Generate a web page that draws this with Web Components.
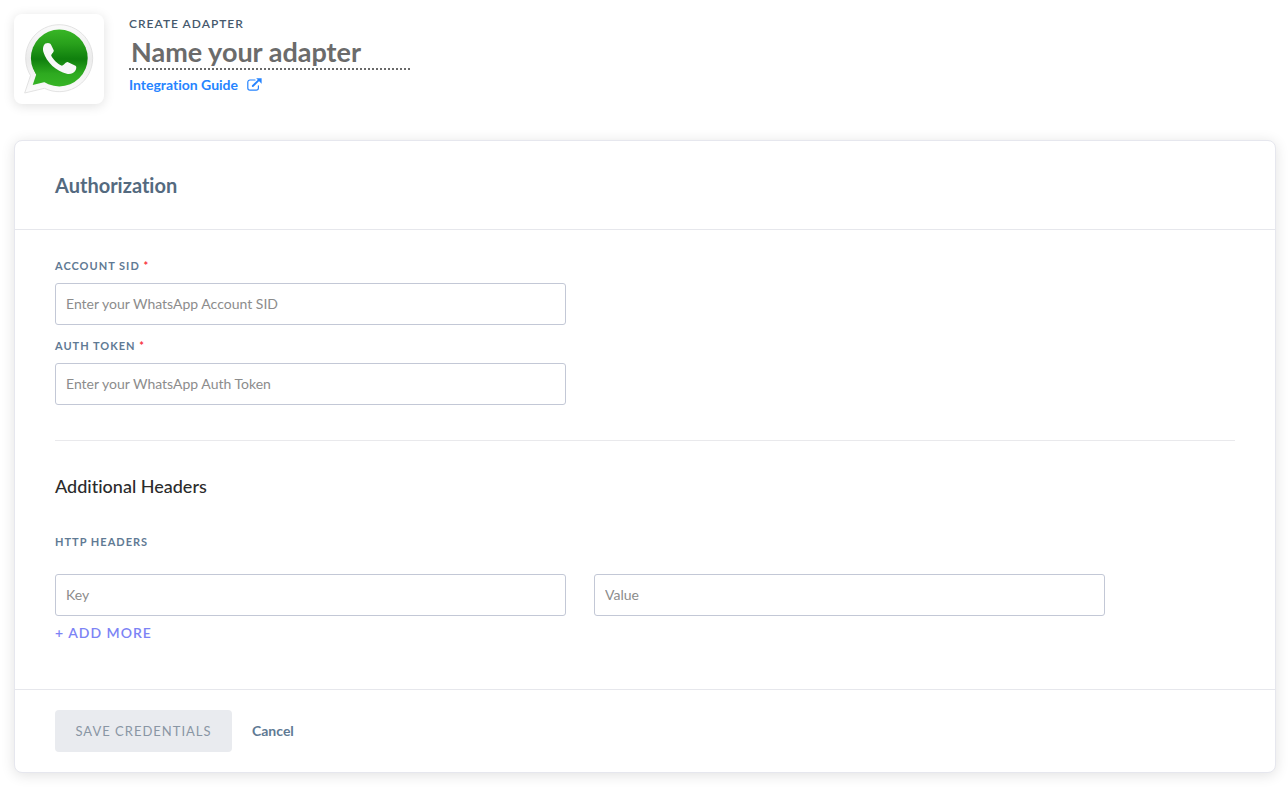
<!DOCTYPE html>
<html lang="en">
<head>
<meta charset="utf-8">
<meta name="viewport" content="width=device-width, initial-scale=1">
<title>Create Adapter</title>
<style>
  body {
    margin: 0;
    background: #fff;
    color: #2b2b2b;
    font-family: Lato, "Liberation Sans", sans-serif;
    font-size: 14px;
    font-variant-ligatures: none;
  }
</style>
</head>
<body>
<adapter-page>
  <adapter-header slot="header"></adapter-header>
  <adapter-card>
    <span slot="title">Authorization</span>
    <credential-fields>
      <text-field label="Account SID" placeholder="Enter your WhatsApp Account SID" required></text-field>
      <text-field label="Auth Token" placeholder="Enter your WhatsApp Auth Token" required></text-field>
    </credential-fields>
    <header-fields></header-fields>
    <form-actions slot="footer"></form-actions>
  </adapter-card>
</adapter-page>

<script>
  function define(name, html, setup) {
    const template = document.createElement('template');
    template.innerHTML = html;
    customElements.define(name, class extends HTMLElement {
      constructor() {
        super();
        this.attachShadow({ mode: 'open' }).append(template.content.cloneNode(true));
      }
      connectedCallback() {
        if (setup && !this.ready) {
          this.ready = true;
          setup(this, this.shadowRoot);
        }
      }
    });
  }

  define('adapter-page', `
    <style>
      :host { display: block; padding: 14px 12px 14px 14px; }
      main { margin-top: 36px; }
    </style>
    <slot name="header"></slot>
    <main><slot></slot></main>
  `);

  define('whatsapp-logo', `
    <style>
      :host {
        display: flex; align-items: center; justify-content: center;
        width: 90px; height: 90px; flex: none;
        border-radius: 8px; background: #fff;
        box-shadow: 0 2px 12px rgba(0, 0, 0, .12);
      }
      svg { display: block; }
    </style>
    <svg width="90" height="90" viewBox="0 0 90 90" role="img" aria-label="WhatsApp">
      <defs>
        <linearGradient id="green" gradientUnits="userSpaceOnUse" x1="0" y1="16" x2="0" y2="72">
          <stop offset="0" stop-color="#38b526"/>
          <stop offset=".25" stop-color="#28a01b"/>
          <stop offset=".52" stop-color="#0f7f0d"/>
          <stop offset=".78" stop-color="#2eaa20"/>
          <stop offset="1" stop-color="#36b425"/>
        </linearGradient>
        <linearGradient id="rim" x1="0" y1="0" x2="0" y2="1">
          <stop offset="0" stop-color="#fafafa"/>
          <stop offset=".5" stop-color="#ececec"/>
          <stop offset="1" stop-color="#fcfcfc"/>
        </linearGradient>
      </defs>
      <path d="M30.500 74.300L10.700 79L16.500 61.500A33.500 33.500 0 1 1 30.500 74.300Z" fill="url(#rim)" stroke="#dcdcdc" stroke-width=".8" stroke-linejoin="round"/>
      <circle cx="45.300" cy="44" r="28.400" fill="url(#green)"/>
      <path d="M20.500 57L22.200 60.500L18.700 71L33 67.500L38 60L24 50Z" fill="url(#green)"/>
      <path d="M31.500 29.600C34 28.500 36.500 29 37.300 31.200L39.700 36.300C40.300 38 37.200 40 37.200 41.600C38.800 45.200 43.300 49.800 47.400 51.600C49.500 52 51.700 48 53.600 48.100L61.500 51.700C62.700 52.300 62.400 54.200 61.700 55.900C60.200 58.900 56.500 60.500 52.800 59.700C42.500 57.300 32.500 48.500 29.400 38C28.400 34.500 29.400 31 31.500 29.600Z" fill="#f8f8f8"/>
    </svg>
  `);

  define('adapter-header', `
    <style>
      :host { display: block; }
      header { display: flex; gap: 25px; }
      .text { display: flex; flex-direction: column; align-items: flex-start; padding-top: 2px; }
      label {
        font-size: 12px; line-height: 16px; font-weight: 600;
        letter-spacing: 1px; text-transform: uppercase; color: #46596d;
      }
      input {
        box-sizing: border-box; width: 281px; height: 34px; margin: 4px 0 5px; padding: 0 2px 2px;
        border: 0; border-bottom: 2px dotted #696969; outline: 0; background: none;
        font: 700 27px/30px Lato, "Liberation Sans", sans-serif; color: #333;
      }
      input::placeholder { color: #6b6b6b; opacity: 1; }
      a {
        display: flex; align-items: center; gap: 9px;
        font-size: 14px; line-height: 20px; font-weight: 700;
        color: #2684ff; text-decoration: none;
      }
    </style>
    <header>
      <whatsapp-logo></whatsapp-logo>
      <div class="text">
        <label for="name">Create Adapter</label>
        <input id="name" type="text" placeholder="Name your adapter">
        <a href="#guide">Integration Guide
          <svg width="15" height="14" viewBox="0 0 15 14" fill="none" aria-hidden="true">
            <path d="M8 2H3A2.200 2.200 0 0 0 .8 4.200V10A2.200 2.200 0 0 0 3 12.200H9.200A2.200 2.200 0 0 0 11.400 10V7.800" stroke="currentColor" stroke-width="1.200" stroke-linecap="round"/>
            <path d="M5.800 8L12 1.900" stroke="currentColor" stroke-width="1.900" stroke-linecap="round"/>
            <path d="M9.200 .3H14.600V5.700Z" fill="currentColor"/>
          </svg>
        </a>
      </div>
    </header>
  `);

  define('adapter-card', `
    <style>
      :host {
        display: block; background: #fff;
        border: 1px solid #e6e7ee; border-radius: 8px;
        box-shadow: 0 2px 14px rgba(0, 0, 0, .12);
      }
      h2 {
        margin: 0; padding: 32px 40px; border-bottom: 1px solid #e6e7ec;
        font-size: 20px; line-height: 24px; font-weight: 700; color: #546a7f;
      }
      .body { padding: 28px 40px 47px; }
      footer { padding: 20px 40px; border-top: 1px solid #e6e7ec; }
    </style>
    <h2><slot name="title"></slot></h2>
    <div class="body"><slot></slot></div>
    <footer><slot name="footer"></slot></footer>
  `);

  define('text-field', `
    <style>
      :host { display: block; }
      label {
        display: block; margin-bottom: 9px;
        font-size: 11px; line-height: 16px; font-weight: 700;
        letter-spacing: 1px; text-transform: uppercase; color: #5f7a94;
      }
      label[hidden], .star[hidden] { display: none; }
      .star { color: #f9303c; }
      input {
        display: block; box-sizing: border-box; width: 100%; height: 42px; padding: 0 10px 1px;
        border: 1px solid #c3c8d6; border-radius: 3px; background: #fff;
        font: 400 14px/20px Lato, "Liberation Sans", sans-serif; color: #333;
      }
      input::placeholder { color: #8c8c8c; opacity: 1; }
    </style>
    <label for="field"><span class="name"></span> <span class="star">*</span></label>
    <input id="field" type="text">
  `, (host, root) => {
    const text = host.getAttribute('label');
    const input = root.querySelector('input');
    root.querySelector('.name').textContent = text || '';
    root.querySelector('label').hidden = !text;
    root.querySelector('.star').hidden = !host.hasAttribute('required');
    input.required = host.hasAttribute('required');
    input.placeholder = host.getAttribute('placeholder') || '';
    if (!text) input.setAttribute('aria-label', input.placeholder);
  });

  define('credential-fields', `
    <style>
      :host { display: block; padding-bottom: 35px; border-bottom: 1px solid #e9e9ec; }
      .grid { display: grid; grid-template-columns: 1fr 1fr; column-gap: 28px; max-width: 1050px; }
      .stack { display: grid; row-gap: 13px; }
    </style>
    <div class="grid"><div class="stack"><slot></slot></div></div>
  `);

  define('header-fields', `
    <style>
      :host { display: block; padding-top: 33px; }
      h3 { margin: 0 0 36px; font-size: 18px; line-height: 24px; font-weight: 500; color: #2b2b2b; }
      h4 {
        margin: 0 0 24px; font-size: 11px; line-height: 16px; font-weight: 700;
        letter-spacing: 1px; text-transform: uppercase; color: #5f7a94;
      }
      .row { display: grid; grid-template-columns: 1fr 1fr; gap: 28px; max-width: 1050px; }
      button {
        display: block; margin: 8px 0 0; padding: 0; border: 0; background: none; cursor: pointer;
        font: 600 14px/18px Lato, "Liberation Sans", sans-serif;
        letter-spacing: 1px; text-transform: uppercase; color: #7c83f5;
      }
    </style>
    <h3>Additional Headers</h3>
    <h4>HTTP Headers</h4>
    <div class="row">
      <text-field placeholder="Key"></text-field>
      <text-field placeholder="Value"></text-field>
    </div>
    <button type="button">+ Add more</button>
  `);

  define('form-actions', `
    <style>
      :host { display: flex; align-items: center; gap: 20px; }
      button { border: 0; font-family: inherit; cursor: pointer; }
      .save {
        height: 42px; min-width: 177px; padding: 0 20px; border-radius: 4px; background: #e9ebef;
        font-size: 13px; line-height: 20px; letter-spacing: 1px; text-transform: uppercase;
        color: #8996a4; cursor: default;
      }
      .cancel { padding: 0; background: none; font-size: 14px; line-height: 20px; font-weight: 700; color: #5f7a94; }
    </style>
    <button class="save" type="submit" disabled>Save credentials</button>
    <button class="cancel" type="button">Cancel</button>
  `);
</script>
</body>
</html>
